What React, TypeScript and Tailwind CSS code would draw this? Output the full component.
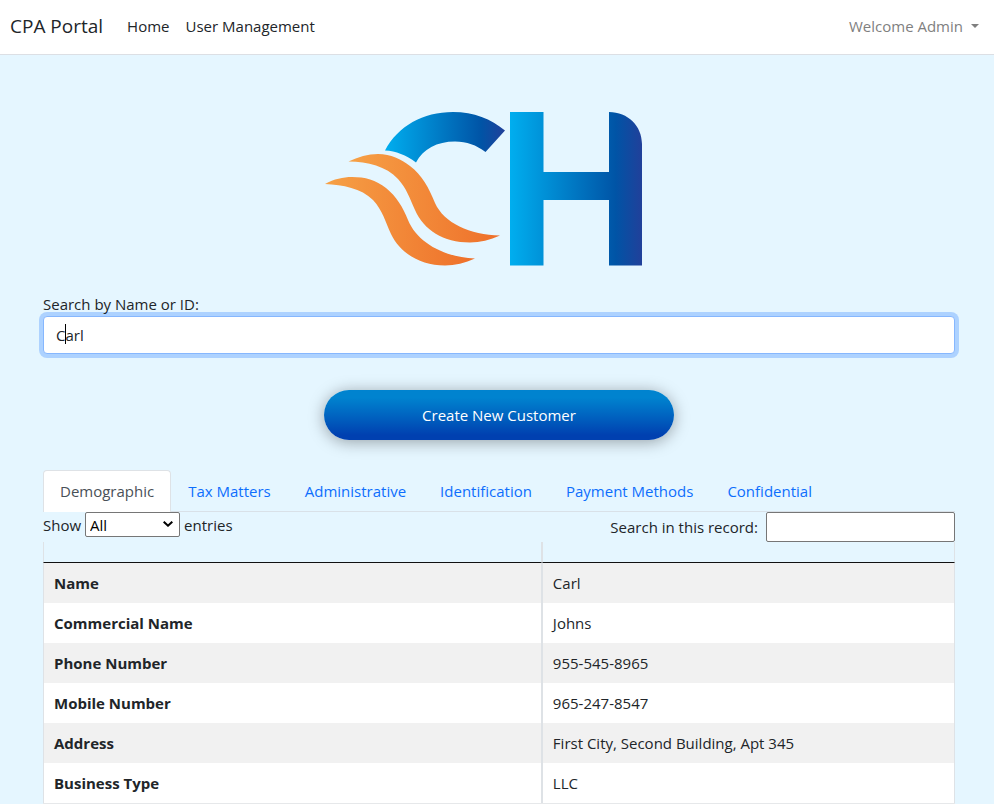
import { useState } from "react";

const tabs = ["Demographic", "Tax Matters", "Administrative", "Identification", "Payment Methods", "Confidential"];

const record = [
  ["Name", "Carl"],
  ["Commercial Name", "Johns"],
  ["Phone Number", "955-545-8965"],
  ["Mobile Number", "965-247-8547"],
  ["Address", "First City, Second Building, Apt 345"],
  ["Business Type", "LLC"],
];

function NavBar() {
  return (
    <nav className="flex h-[55px] items-center border-b border-[#dcdfe4] bg-white pr-[15px] pb-[2px] pl-[10px]">
      <a href="#" className="mr-6 text-[19px]">CPA Portal</a>
      <a href="#" className="mr-4">Home</a>
      <a href="#">User Management</a>
      <button type="button" className="ml-auto flex items-center gap-2 text-[#7f7f7f]">
        Welcome Admin
        <span className="border-x-4 border-t-4 border-x-transparent border-t-[#7f7f7f]" />
      </button>
    </nav>
  );
}

function Logo() {
  return (
    <svg viewBox="0 0 318 154" className="mr-[31px] h-[154px] w-[318px]" role="img" aria-label="CH">
      <defs>
        <linearGradient id="blue">
          <stop offset="0" stopColor="#00aeef" />
          <stop offset="0.8" stopColor="#0054a6" />
          <stop offset="1" stopColor="#21409a" />
        </linearGradient>
        <linearGradient id="orange">
          <stop offset="0" stopColor="#f6a146" />
          <stop offset="1" stopColor="#ee6f2a" />
        </linearGradient>
      </defs>
      <path fill="url(#blue)" d="M60 38.500C73 14 98 0 128 0C149 0 166 7 180 18.500L160.500 40C151 33 142 29.500 130 29.500C112 29.500 98 37 91 50.500C81 43 71 39 60 38.500Z" />
      <path fill="url(#orange)" d="M23.500 49.500C33 45 43 42 53 42C66 42 76 47 85 54C97 63 104 76 110 91C119 111 145 123 175 123.500C165 128 155 130.500 145 130.500C118 130.500 99 118 90 98C84 85 82 77 73 67C61 54 43 50 23.500 49.500Z" />
      <path fill="url(#orange)" d="M0 72C9 67 18 65 27 65C40 65 51 68 61 76C71 84 78 95 83 108C92 130 118 145 150 146.500C140 151 130 153.500 120 153.500C95 153.500 75 141 66 122C60 109 58 99 48 88C36 76 18 73 0 72Z" />
      <path fill="url(#blue)" d="M185 0H218.500V60H284V0C303 0 317 14 317 32V153.500H284V88H218.500V153.500H185Z" />
    </svg>
  );
}

function Tabs({ active, onSelect }: { active: string; onSelect: (tab: string) => void }) {
  return (
    <div role="tablist" className="flex border-b border-[#d9e1e8]">
      {tabs.map((tab) => (
        <button
          key={tab}
          type="button"
          role="tab"
          aria-selected={tab === active}
          onClick={() => onSelect(tab)}
          className={
            tab === active
              ? "-mb-px h-[42px] rounded-t border border-b-0 border-[#dee2e6] bg-white px-4 pb-[2px] text-[#495057]"
              : "h-[41px] border border-transparent px-4 text-[#0d6efd]"
          }
        >
          {tab}
        </button>
      ))}
    </div>
  );
}

export default function App() {
  const [query, setQuery] = useState("Carl");
  const [active, setActive] = useState("Demographic");
  return (
    <div className="min-h-screen bg-white font-['Open_Sans','Noto_Sans',sans-serif] text-[15px] leading-6 text-[#212529]">
      <NavBar />
      <main className="bg-[#e5f6ff] pt-[57px] pr-[39px] pl-[43px]">
        <div className="flex justify-center">
          <Logo />
        </div>
        <label htmlFor="customer" className="relative z-10 mt-[26px] block">Search by Name or ID:</label>
        <div className="relative">
          <input
            id="customer"
            value={query}
            onChange={(e) => setQuery(e.target.value)}
            className="block h-[38px] w-full rounded border border-[#86b7fe] bg-white px-3 caret-transparent ring-4 ring-[#add2ff] outline-none"
          />
          <span className="pointer-events-none absolute top-2 left-[22px] h-5 w-px bg-black" />
        </div>
        <div className="mt-9 mb-[30px] flex justify-center">
          <button
            type="button"
            className="h-[50px] w-[350px] rounded-full bg-linear-to-b from-[#0083cf] from-15% to-[#0040b0] to-90% text-white shadow-[0_2px_16px_rgba(0,0,0,0.35)]"
          >
            Create New Customer
          </button>
        </div>
        <Tabs active={active} onSelect={setActive} />
        <div className="flex items-start justify-between">
          <div className="flex items-center gap-1">
            <label htmlFor="length">Show</label>
            <div className="relative">
              <select
                id="length"
                className="block h-[25px] w-[95px] appearance-none rounded-[2px] border border-[#767676] bg-white pl-1 leading-[22px] text-black"
              >
                <option>All</option>
                <option>10</option>
                <option>25</option>
              </select>
              <svg viewBox="0 0 10 6" className="pointer-events-none absolute top-[9px] right-[7px] h-[6px] w-[10px]" aria-hidden="true">
                <path d="M0.700 0.700L5 4.700L9.300 0.700" fill="none" stroke="#000" strokeWidth="2" />
              </svg>
            </div>
            <span>entries</span>
          </div>
          <label className="flex items-center gap-2">
            Search in this record:
            <input type="search" className="h-[30px] w-[189px] rounded-[2px] border border-[#767676] bg-white px-1" />
          </label>
        </div>
        <table className="w-full table-fixed border-separate border-spacing-0 border-b border-[#e6e8ea] text-left">
          <colgroup>
            <col className="w-[54.7%]" />
            <col />
          </colgroup>
          <thead>
            <tr className="h-[21px]">
              <th aria-label="Field" className="border-x border-b border-x-[#dee2e6] border-b-[#111111] p-0" />
              <th aria-label="Value" className="border-x border-b border-x-[#dee2e6] border-b-[#111111] p-0" />
            </tr>
          </thead>
          <tbody>
            {record.map(([name, value]) => (
              <tr key={name} className="h-10 odd:bg-[#f1f1f1] even:bg-white">
                <th scope="row" className="border-x border-[#dee2e6] px-[10px] py-2 font-bold">{name}</th>
                <td className="border-x border-[#dee2e6] px-[10px] py-2">{value}</td>
              </tr>
            ))}
          </tbody>
        </table>
      </main>
    </div>
  );
}
